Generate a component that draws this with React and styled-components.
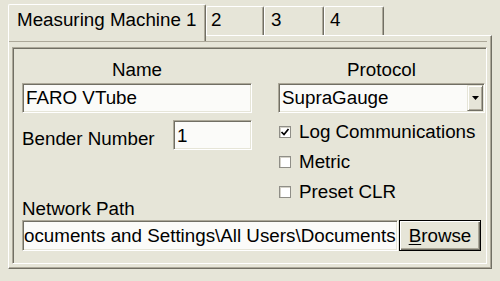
import React from "react";
import styled, { createGlobalStyle } from "styled-components";

const C = {
  bg: "#e6e5d8",
  light: "#ffffff",
  shadow: "#aca899",
  dark: "#716f64",
  field: "#fbfbf9",
};

const Global = createGlobalStyle`
  html, body { margin: 0; padding: 0; background: ${C.bg}; }
  body {
    font-family: "Liberation Sans", Arial, sans-serif;
    font-size: 18.8px;
    color: #000;
  }
  * { box-sizing: border-box; }
`;

const Window = styled.div`
  width: 492px;
  padding: 4px 0 0 8px;
`;

const TabStrip = styled.div`
  display: flex;
  align-items: flex-end;
  height: 31px;
`;

const Tab = styled.div`
  position: relative;
  z-index: ${(p) => (p.$active ? 1 : 0)};
  width: ${(p) => p.$w}px;
  height: ${(p) => (p.$active ? 37 : 29)}px;
  margin-bottom: ${(p) => (p.$active ? -6 : 0)}px;
  padding: ${(p) => (p.$active ? 4 : 2)}px 0 0 ${(p) => p.$pad}px;
  background: ${C.bg};
  border-top: 1px solid ${C.light};
  border-left: 1px solid ${C.light};
  border-right: 1px solid ${C.dark};
  border-radius: 2px 2px 0 0;
  box-shadow: inset -1px 0 0 ${C.shadow};
  line-height: 22px;
  white-space: nowrap;
`;

const Panel = styled.div`
  width: 484px;
  height: 234px;
  padding-top: 5px;
  border-top: 1px solid ${C.light};
  border-left: 1px solid ${C.light};
  border-right: 1px solid ${C.dark};
  border-bottom: 1px solid ${C.dark};
  box-shadow: inset -1px -1px 0 ${C.shadow};
`;

const SubFrame = styled.div`
  border-top: 1px solid ${C.shadow};
  padding: 5px 0 0 3px;
  margin-right: 4px;
`;

const GroupFrame = styled.div`
  width: 475px;
  height: 217px;
  padding: 11px 0 0 9px;
  border-top: 1px solid ${C.shadow};
  border-left: 1px solid ${C.shadow};
  border-right: 1px solid ${C.light};
  border-bottom: 1px solid ${C.light};
  box-shadow: inset 1px 1px 0 ${C.dark}, inset -1px -1px 0 ${C.bg};
  display: flex;
  flex-direction: column;
`;

const TopGrid = styled.div`
  display: grid;
  grid-template-columns: 230px 207px;
  column-gap: 26px;
  height: 141px;
`;

const Column = styled.div`
  display: flex;
  flex-direction: column;
`;

const Header = styled.div`
  height: 22px;
  line-height: 22px;
  text-align: center;
  margin-bottom: 2px;
`;

const Field = styled.div`
  width: ${(p) => (p.$w ? `${p.$w}px` : "100%")};
  height: ${(p) => p.$h || 30}px;
  flex: none;
  display: flex;
  align-items: center;
  padding: ${(p) => (p.$pt || 0)}px 0 0 ${(p) => (p.$pl || 3)}px;
  background: ${C.field};
  border-top: 1px solid ${C.shadow};
  border-left: 1px solid ${C.shadow};
  border-right: 1px solid ${C.light};
  border-bottom: 1px solid ${C.light};
  box-shadow: inset 1px 1px 0 ${C.dark}, inset -1px -1px 0 ${C.bg};
  line-height: 22px;
  white-space: nowrap;
  overflow: hidden;
`;

const SelectBox = styled(Field)`
  justify-content: space-between;
  padding-right: 1px;
`;

const DropBtn = styled.div`
  width: 16px;
  height: 26px;
  flex: none;
  background: ${C.bg};
  border-top: 1px solid ${C.bg};
  border-left: 1px solid ${C.bg};
  border-right: 1px solid ${C.dark};
  border-bottom: 1px solid ${C.dark};
  box-shadow: inset 1px 1px 0 ${C.light}, inset -1px -1px 0 ${C.shadow};
  display: flex;
  align-items: center;
  justify-content: center;
`;

const BenderRow = styled.div`
  display: flex;
  align-items: flex-end;
  margin-top: 7px;
  height: 30px;
`;

const Label = styled.div`
  line-height: ${(p) => p.$lh || 22}px;
  white-space: nowrap;
`;

const CheckList = styled.div`
  display: flex;
  flex-direction: column;
  gap: 14px;
  margin-top: 11px;
`;

const CheckRow = styled.div`
  display: flex;
  align-items: center;
  height: 16px;
  line-height: 16px;
  padding-left: 1px;
  gap: 8px;
`;

const Box = styled.div`
  width: 12px;
  height: 12px;
  flex: none;
  background: #fff;
  border: 1px solid #8f8e87;
  box-shadow: inset 1px 1px 0 #d4d2c8;
  display: flex;
  align-items: center;
  justify-content: center;
`;

const NetLabel = styled(Label)`
  margin-top: 1px;
`;

const PathRow = styled.div`
  display: flex;
  align-items: center;
  gap: 1px;
  margin-top: 3px;
`;

const Button = styled.div`
  width: 82px;
  height: 31px;
  flex: none;
  display: flex;
  align-items: center;
  justify-content: center;
  padding-top: 1px;
  background: ${C.bg};
  border: 1px solid #000;
  box-shadow: inset 1px 1px 0 ${C.light}, inset -1px -1px 0 ${C.dark},
    inset -2px -2px 0 ${C.shadow};
  line-height: 22px;
  u { text-underline-offset: 2px; }
`;

function Check({ checked, children }) {
  return (
    <CheckRow>
      <Box>
        {checked && (
          <svg width="10" height="10" viewBox="0 0 10 10">
            <polyline points="1.5,5 4,7.5 8.5,2" fill="none" stroke="#000" strokeWidth="1.7" />
          </svg>
        )}
      </Box>
      <span>{children}</span>
    </CheckRow>
  );
}

export default function App() {
  return (
    <>
      <Global />
      <Window>
        <TabStrip>
          <Tab $active $w={198} $pad={8}>Measuring Machine 1</Tab>
          <Tab $w={58} $pad={4}>2</Tab>
          <Tab $w={60} $pad={6}>3</Tab>
          <Tab $w={60} $pad={5}>4</Tab>
        </TabStrip>
        <Panel>
          <SubFrame>
            <GroupFrame>
              <TopGrid>
                <Column>
                  <Header>Name</Header>
                  <Field $pl={3}>FARO VTube</Field>
                  <BenderRow>
                    <Label>Bender Number</Label>
                    <Field $w={79} style={{ marginLeft: "auto" }} $pl={3} $pt={1}>1</Field>
                  </BenderRow>
                </Column>
                <Column>
                  <Header>Protocol</Header>
                  <SelectBox $pl={3}>
                    <span>SupraGauge</span>
                    <DropBtn>
                      <svg width="7" height="4" viewBox="0 0 7 4">
                        <polygon points="0,0 7,0 3.5,4" fill="#000" />
                      </svg>
                    </DropBtn>
                  </SelectBox>
                  <CheckList>
                    <Check checked>Log Communications</Check>
                    <Check>Metric</Check>
                    <Check>Preset CLR</Check>
                  </CheckList>
                </Column>
              </TopGrid>
              <NetLabel $lh={16}>Network Path</NetLabel>
              <PathRow>
                <Field $w={376} $h={31} $pl={1} $pt={1}>ocuments and Settings\All Users\Documents</Field>
                <Button>
                  <span><u>B</u>rowse</span>
                </Button>
              </PathRow>
            </GroupFrame>
          </SubFrame>
        </Panel>
      </Window>
    </>
  );
}
